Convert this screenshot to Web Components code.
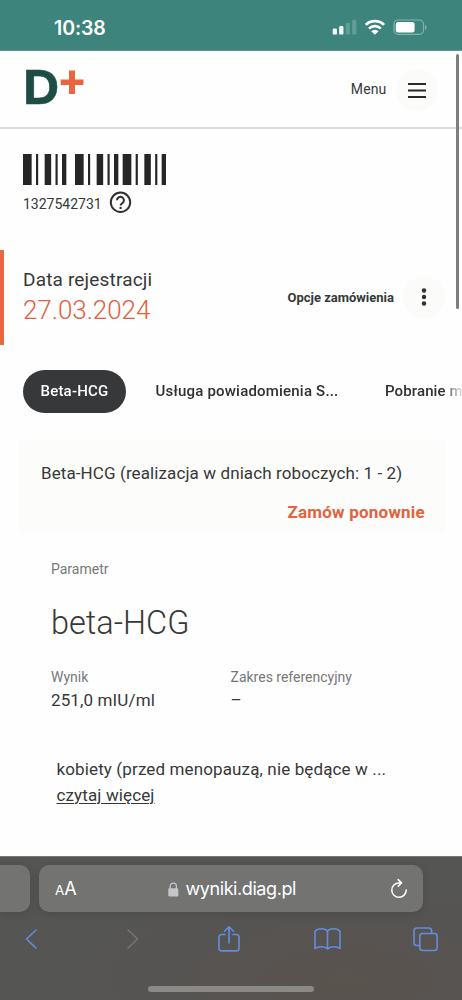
<!DOCTYPE html>
<html lang="pl">
<head>
<meta charset="utf-8">
<title>Wyniki</title>
<style>
html,body{margin:0;height:1000px;overflow:hidden;background:#fefefe}
body{font-family:Roboto,"Noto Sans",sans-serif;color:#373839}
</style>
</head>
<body>
<results-app></results-app>
<script>
const define=(name,css,html)=>customElements.define(name,class extends HTMLElement{
  constructor(){
    super();
    const t=document.createElement('template');
    t.innerHTML=`<style>*{box-sizing:border-box}svg{display:block;flex:none}${css}</style>${html}`;
    this.attachShadow({mode:'open'}).append(t.content.cloneNode(true));
  }
});

define('status-bar',`
:host{display:flex;height:51px;background:#3c847c;color:#fff;font:600 19.5px/24px Inter,sans-serif;padding:16px 35px 0 54px;justify-content:space-between;border-bottom:1px solid #5c968f;box-sizing:border-box}
span{letter-spacing:-.1px}
svg{margin-top:1px}`,
`<span>10:38</span>
<svg width="96" height="22" viewBox="331 17 96 22"><g fill="#fff"><rect x="332.7" y="28.6" width="4.2" height="6" rx="1.2"/><rect x="339.2" y="26" width="4.2" height="8.6" rx="1.2"/></g><g fill="#5f9f98"><rect x="345.7" y="22.8" width="4.2" height="11.8" rx="1.2"/><rect x="352.2" y="19.8" width="4.2" height="14.8" rx="1.2"/></g>
<g fill="none" stroke="#fff" stroke-width="2.7"><path d="M365.7 24.9a13 13 0 0 1 18.4 0M369 28.6a8.4 8.4 0 0 1 11.8 0"/></g><path d="M371.2 31.2a5.3 5.3 0 0 1 7.4 0l-3.7 3.6z" fill="#fff"/>
<rect x="394" y="20" width="29.5" height="14.4" rx="4.3" fill="none" stroke="#84b2ad" stroke-width="1.2"/><rect x="395.8" y="21.9" width="18.8" height="10.7" rx="2.5" fill="#fff"/><path d="M425 25v4.800q1.600-.6 1.600-2.400T425 25z" fill="#84b2ad"/></svg>`);

define('brand-logo',`
:host{display:flex;align-items:flex-start;color:#1e4d45;font:700 47px/34px Inter,sans-serif}
span{width:37px;margin-left:-1px;transform:scaleX(1.07);transform-origin:left;-webkit-text-stroke:.5px #1e4d45}`,
`<span>D</span><svg width="24" height="25" viewBox="0 0 24 25"><path d="M9 .5h6v9h8.500v5.600H15v9H9v-9H.7V9.500H9z" fill="#e8663f"/></svg>`);

define('round-button',`
:host{display:flex;width:42px;height:42px;border-radius:50%;background:#fbfbf9;align-items:center;justify-content:center;flex:none}`,`<slot></slot>`);

define('site-header',`
:host{display:flex;height:78px;border-bottom:2px solid #dcdddd;padding:0 24px 0 24px;justify-content:space-between;box-sizing:border-box}
brand-logo{margin-top:19px}
div{display:flex;align-items:center;height:77px;font-size:14px;gap:9.500px}
span{letter-spacing:.15px;margin-top:-1px}`,
`<brand-logo></brand-logo><div><span>Menu</span><round-button><svg width="18" height="16" viewBox="0 0 18 16"><path d="M0 2h18M0 8.500h18M0 15h18" stroke="#29292a" stroke-width="2"/></svg></round-button></div>`);

define('order-code',`
:host{display:block;padding:25px 23px 0;height:120.500px;box-sizing:border-box}
div{display:flex;align-items:center;height:25px;margin-top:5px;font-size:14px;gap:8px}
span{width:78px;white-space:nowrap;padding-top:2px}`,
`<svg width="143" height="31" viewBox="0 0 66 14" preserveAspectRatio="none"><path fill="#262627" d="M0 0h4v14H0zM6 0h1v14H6zM10 0h3v14h-3zM15 0h1v14h-1zM18 0h2v14h-2zM24 0h4v14h-4zM30 0h1v14h-1zM34 0h3v14h-3zM39 0h1v14h-1zM42 0h2v14h-2zM46 0h4v14h-4zM52 0h1v14h-1zM56 0h3v14h-3zM61 0h1v14h-1zM64 0h2v14h-2z"/></svg>
<div><span>1327542731</span><svg width="23" height="23" viewBox="0 0 23 23" fill="none" stroke="#303031"><circle cx="11.500" cy="11.300" r="9.700" stroke-width="2"/><path d="M8 9.200a3.450 3.450 0 1 1 5.600 2.700c-1.200.9-2 1.300-2 2.700" stroke-width="2"/><circle cx="11.600" cy="16.900" r="1.200" fill="#303031" stroke="none"/></svg></div>`);

define('order-summary',`
:host{display:flex;height:95px;border-left:4px solid #e8683f;padding:0 17px 0 19px;justify-content:space-between;align-items:center;box-sizing:border-box}
h2,p{margin:0;font-weight:400;white-space:nowrap}
h2{font-size:19px;line-height:28px;letter-spacing:.17px}
p{font-size:26px;line-height:32px;font-weight:300;color:#e4603c;letter-spacing:-.05px}
.d{margin-top:-2px}
.o{display:flex;align-items:center;gap:9px;font-size:13px;font-weight:700;white-space:nowrap}`,
`<div class="d"><h2>Data rejestracji</h2><p>27.03.2024</p></div><div class="o"><span>Opcje zamówienia</span><round-button><svg width="6" height="18" viewBox="0 0 6 18" fill="#303031"><circle cx="3" cy="2.500" r="2.200"/><circle cx="3" cy="9" r="2.200"/><circle cx="3" cy="15.500" r="2.200"/></svg></round-button></div>`);

define('tab-item',`
:host{display:flex;align-items:center;height:43px;border-radius:22px;padding:0 17.500px 1px;font-size:15px;letter-spacing:.2px;font-weight:500;color:#303031;white-space:nowrap;flex:none;box-sizing:border-box}
:host([active]){background:#373839;color:#fff}`,`<slot></slot>`);

define('test-tabs',`
:host{display:flex;height:43px;margin-top:25.500px;padding-left:23px;gap:12.500px;overflow:hidden;-webkit-mask-image:linear-gradient(90deg,#000 443px,#0006 455px,#0002 462px);mask-image:linear-gradient(90deg,#000 443px,#0006 455px,#0002 462px)}
.b{width:217px}.a{width:102.500px}.c{padding-right:0;letter-spacing:.12px}`,
`<tab-item active class="a">Beta-HCG</tab-item><tab-item class="b">Usługa powiadomienia S...</tab-item><tab-item style="padding-right:0;letter-spacing:.12px">Pobranie m</tab-item>`);

define('test-banner',`
:host{display:flex;flex-direction:column;height:92px;margin:27px 17px 0 18px;padding:21px 20px 0 23px;background:#fcfcfa;font-size:17px;line-height:24px;box-sizing:border-box;white-space:nowrap;letter-spacing:.1px}
a{align-self:flex-end;margin-top:15px;font-weight:700;color:#e3623f;letter-spacing:.22px}`,
`<span>Beta-HCG (realizacja w dniach roboczych: 1 - 2)</span><a>Zamów ponownie</a>`);

define('test-result',`
:host{display:block;padding:27px 51px 0;white-space:nowrap}
small{display:block;font-size:14px;line-height:20px;color:#77787a}
h1{margin:24px 0 0;font-weight:300;font-size:32.500px;line-height:40px}
.g{display:grid;grid-template-columns:179.500px 1fr;margin-top:24px}
p{margin:0;font-size:17px;line-height:26px;letter-spacing:.13px}
.n{margin:43px 0 0 5.500px}
u{text-underline-offset:2px;text-decoration-thickness:1px}`,
`<small>Parametr</small><h1>beta-HCG</h1><div class="g"><div><small>Wynik</small><p>251,0 mIU/ml</p></div><div><small>Zakres referencyjny</small><p>–</p></div></div><div class="n"><p>kobiety (przed menopauzą, nie będące w ...</p><p><u>czytaj więcej</u></p></div>`);

define('page-scrollbar',`:host{position:absolute;left:455.500px;top:54px;width:3.500px;height:255px;border-radius:2px;background:#7e7e7e}`,``);

define('address-bar',`
:host{display:flex;gap:9px;height:47px;color:#fff;font:18px/24px Inter,sans-serif}
.p{width:30px;border-radius:0 10px 10px 0;background:#737371;box-shadow:0 2px 9px #0002}
.f{width:384px;border-radius:10px;background:#737371;box-shadow:0 2px 9px #0002;display:grid;grid-template-columns:128.500px 1fr 48px;align-items:center}
.a{padding:2px 0 0 16px;font-size:18px}.a small{font-size:13.500px}
.u{display:flex;align-items:center;gap:7px;letter-spacing:-.42px;white-space:nowrap;padding-top:1px}`,
`<div class="p"></div><div class="f"><span class="a"><small>A</small>A</span><span class="u"><svg width="11" height="15" viewBox="0 0 11 15"><rect x=".3" y="6.300" width="10" height="8.200" rx="1.300" fill="#c5c5c9"/><path d="M2.200 7V4.200a3.100 3.100 0 0 1 6.200 0V7" fill="none" stroke="#c5c5c9" stroke-width="1.300"/></svg><span>wyniki.diag.pl</span></span><svg width="18" height="22" viewBox="0 0 18 22" fill="none" stroke="#fff" stroke-width="1.500" stroke-linecap="round" stroke-linejoin="round" style="margin-left:15px"><path d="M10.500 4.900H9A7.200 7.200 0 1 0 16.200 12M8.200 1.600l3.300 3.300-3.300 3.300"/></svg></div>`);

define('browser-tools',`
:host{display:flex;align-items:center;height:28px;margin-top:13px;padding-left:25px}
svg{fill:none;stroke:#648ce0;stroke-width:1.600;stroke-linecap:round;stroke-linejoin:round}
.fwd{stroke:#747473;margin-left:88px}.share{margin-left:79px}.book{margin-left:73.500px}.tabs{margin-left:72.500px}`,
`<svg width="13" height="20" viewBox="0 0 13 20"><path d="M11 1 1.500 10l9.500 9"/></svg>
<svg class="fwd" width="13" height="20" viewBox="0 0 13 20"><path d="m2 1 9.500 9L2 19"/></svg>
<svg class="share" width="22" height="28" viewBox="0 0 22 28"><path d="M7 9.500H3.700Q1 9.500 1 12.200v11q0 2.700 2.700 2.700h14.600q2.700 0 2.700-2.700v-11q0-2.700-2.700-2.700H15M11 18V2M6.500 6.300 11 1.800l4.500 4.500"/></svg>
<svg class="book" width="27" height="24" viewBox="0 0 27 24"><path d="M13.500 4.200C11 .9 4 .9 1 4.200v17.300c3-2.500 10-2.500 12.500.5 2.500-3 9.500-3 12.500-.5V4.200C23 .9 16 .9 13.500 4.200V22"/></svg>
<svg class="tabs" width="25" height="25" viewBox="0 0 25 25"><path d="M6.800 18.500H3.700Q1 18.500 1 15.800V3.700Q1 1 3.700 1h12.200q2.700 0 2.700 2.700v2.800"/><rect x="6.800" y="6.500" width="17.300" height="17" rx="2.700"/></svg>`);

define('browser-chrome',`
:host{position:absolute;left:0;top:856px;width:462px;height:144px;background:radial-gradient(ellipse at 75% 85%,#5a534e 0,#565452 35%,transparent 60%),#555553;border-top:1px solid #777776;padding-top:8px;box-sizing:border-box;overflow:hidden}
i{display:block;width:166px;height:5.500px;border-radius:3px;background:#8b8986;margin:33px 0 0 148px}`,
`<address-bar></address-bar><browser-tools></browser-tools><i></i>`);

define('results-app',`:host{display:block;position:relative;width:462px;height:1000px;overflow:hidden}`,
`<status-bar></status-bar><site-header></site-header><order-code></order-code><order-summary></order-summary><test-tabs></test-tabs><test-banner></test-banner><test-result></test-result><page-scrollbar></page-scrollbar><browser-chrome></browser-chrome>`);
</script>
</body>
</html>
